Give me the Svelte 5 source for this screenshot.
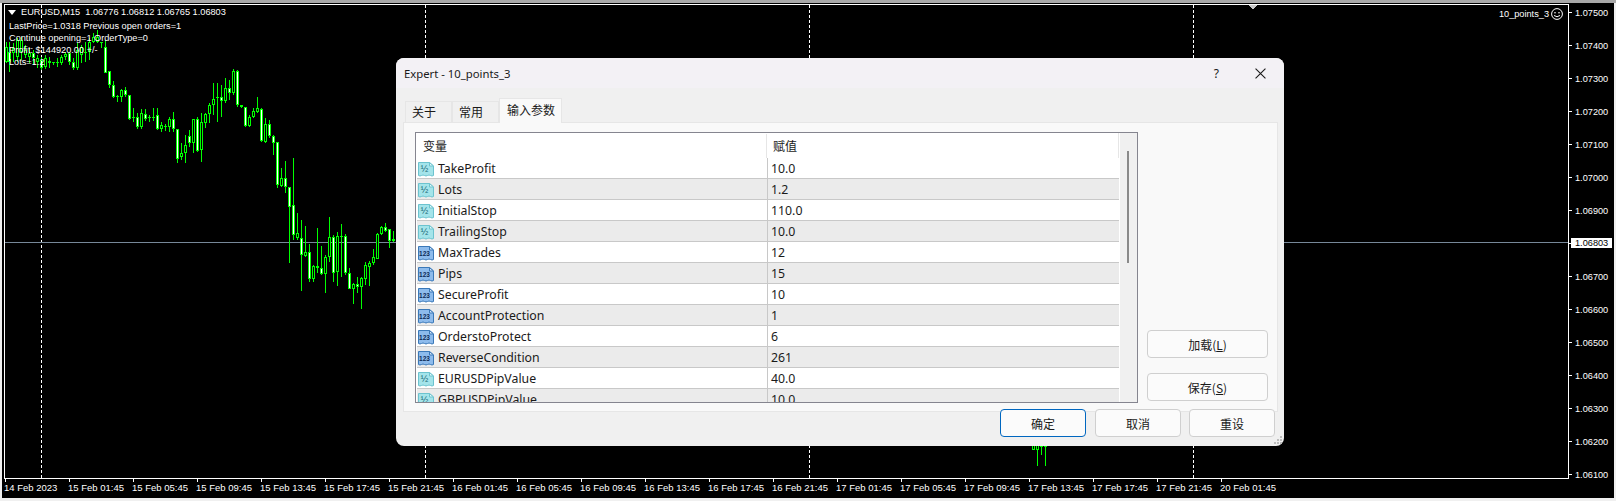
<script>
	// candles traced from the 3x crops: [x, high, low, bodyTop, bodyBottom, bear]
	const upper = [
		[20,125,190,140,185,0],[28,125,215,155,185,1],[40,130,185,145,160,0],[52,115,185,120,170,0],
		[64,110,180,120,155,0],[76,135,175,150,165,0],[88,145,190,160,170,0],[100,150,195,158,175,1],
		[112,165,205,175,185,0],[124,170,210,180,205,1],[136,165,208,175,200,0],[148,170,205,182,188,0],
		[160,185,195,187,190,0],[172,175,200,187,190,0],[184,165,195,172,188,0],[196,155,180,162,172,0],
		[208,155,195,160,185,1],[220,175,210,185,205,1],[232,130,210,150,203,0],[244,135,190,140,165,0],
		[256,125,185,155,160,0],[268,115,180,125,155,0],[280,100,130,110,125,0],[292,90,130,110,125,0],
		[304,125,145,125,130,0],[316,120,218,140,218,1],[328,212,265,214,256,1],[340,243,295,256,290,1],
		[352,285,305,287,290,0],[364,268,305,270,290,0],[376,262,290,270,285,1],[388,285,360,286,356,1],
		[400,325,365,352,355,0],[412,340,388,352,382,1],[424,328,388,340,382,0],[436,328,362,342,358,1],
		[448,345,365,351,354,0],[460,325,362,350,353,0],[472,325,390,346,388,1],[484,365,395,376,388,0],
		[496,372,392,378,382,0],[508,352,395,358,382,0],[520,335,395,358,388,1],[532,388,490,388,476,1],
		[544,430,480,460,472,0],[556,405,490,436,460,0],[568,390,440,408,428,1],[580,358,460,358,428,0],
		[592,350,455,358,452,1],[604,340,485,366,450,0],[616,340,385,342,370,0],[628,310,370,314,342,0],
		[640,250,345,296,314,0],[652,250,365,292,295,0],[664,255,350,292,302,1],[676,235,310,265,302,0],
		[688,240,300,265,278,1],[700,208,285,214,278,0],[712,210,320,214,314,1],[724,315,325,316,322,1],
		[736,320,380,322,378,1],[748,345,380,350,378,0],[760,325,355,332,350,0],[772,292,340,325,335,0],
		[784,325,425,326,424,1],[796,355,430,372,425,0],[808,360,415,372,408,1],[820,405,465,408,428,1],
		[832,426,564,426,555,1]
	];
	const lower = [
		[844,-96,-39,-66,-42,0],[856,-117,-21,-66,-39,1],[868,-39,190,-39,22,1],[880,-126,120,15,105,1],
		[892,40,120,100,115,0],[904,60,272,115,165,1],[916,78,170,155,167,0],[928,132,245,157,236,1],
		[940,195,245,197,238,0],[952,85,218,197,203,0],[964,138,225,203,223,1],[976,165,278,172,223,0],
		[988,52,185,112,172,0],[1000,105,245,112,218,1],[1012,95,258,108,215,0],[1024,72,230,108,111,0],
		[1036,103,225,108,218,1],[1048,205,268,218,266,1],[1060,250,312,252,266,0],[1072,232,278,253,260,1],
		[1084,232,326,235,260,0],[1096,185,255,196,236,0],[1108,182,258,190,200,0],[1120,148,195,172,190,0],
		[1132,100,178,102,176,0],[1144,78,105,82,103,0],[1156,70,95,82,92,1],[1168,88,143,88,122,1],
		[1180,93,125,118,122,0]
	];
	const toCandle = (yBase) => ([x, hi, lo, top, bottom, bear]) => ({
		x: Math.floor(x / 3),
		hi: Math.round(yBase + hi / 3),
		lo: Math.round(yBase + lo / 3),
		top: Math.round(yBase + top / 3),
		bottom: Math.round(yBase + bottom / 3),
		bear
	});
	// the few that stick out under the dialog
	const tail = [
		{ x: 1033, hi: 440, lo: 450, top: 440, bottom: 450, bear: 0 },
		{ x: 1037, hi: 440, lo: 466, top: 440, bottom: 450, bear: 0 },
		{ x: 1041, hi: 440, lo: 455, top: 440, bottom: 447, bear: 0 },
		{ x: 1045, hi: 440, lo: 466, top: 440, bottom: 447, bear: 0 }
	];
	const candles = [...upper.map(toCandle(0)), ...lower.map(toCandle(200)), ...tail];

	const sessionLines = [41, 425, 809, 1193];
	const prices = ['1.07500','1.07400','1.07300','1.07200','1.07100','1.07000','1.06900','','1.06700','1.06600','1.06500','1.06400','1.06300','1.06200','1.06100'];
	const times = ['14 Feb 2023','15 Feb 01:45','15 Feb 05:45','15 Feb 09:45','15 Feb 13:45','15 Feb 17:45','15 Feb 21:45','16 Feb 01:45','16 Feb 05:45','16 Feb 09:45','16 Feb 13:45','16 Feb 17:45','16 Feb 21:45','17 Feb 01:45','17 Feb 05:45','17 Feb 09:45','17 Feb 13:45','17 Feb 17:45','17 Feb 21:45','20 Feb 01:45'];
	const inputs = [
		['TakeProfit','10.0','d'],['Lots','1.2','d'],['InitialStop','110.0','d'],['TrailingStop','10.0','d'],
		['MaxTrades','12','i'],['Pips','15','i'],['SecureProfit','10','i'],['AccountProtection','1','i'],
		['OrderstoProtect','6','i'],['ReverseCondition','261','i'],['EURUSDPipValue','40.0','d'],['GBPUSDPipValue','10.0','d']
	];
</script>

{#snippet typeIcon(kind)}
	<svg class="type-icon" class:int={kind === 'i'} viewBox="0 0 16 16" width="16" height="16">
		<path class="doc" d="M.5 1.500h11l4 3.500v9.500q-1.500 1-3 0t-3 0-3 0-3 0-3 0z" />
		<path class="fold" d="M11.500 1.500v3.500h4z" />
		<text x="6.500" y="10.800" class="glyph">{kind === 'i' ? '123' : '½'}</text>
	</svg>
{/snippet}

<div class="screen">
	<div class="terminal">
		<div class="plot">
			<svg class="chart" viewBox="5 5 1563 473" width="1563" height="473" shape-rendering="crispEdges">
				{#each sessionLines as x}
					<line x1={x + 0.5} y1="5" x2={x + 0.5} y2="478" class="session" />
				{/each}
				<line x1="5" y1="242.500" x2="1568" y2="242.500" class="bid" />
				{#each candles as c}
					<rect x={c.x} y={c.hi} width="1" height={Math.max(c.lo - c.hi, 1)} fill="#00ff00" />
					<rect x={c.x - 1} y={c.top} width="3" height={Math.max(c.bottom - c.top, 1)} fill="#00ff00" />
					{#if c.bottom - c.top > 2}
						<rect x={c.x} y={c.top + 1} width="1" height={c.bottom - c.top - 2} fill={c.bear ? '#ffffff' : '#000000'} />
					{/if}
				{/each}
				<path d="M1248 5h9l-4.500 4.500z" fill="#c8c8c8" />
			</svg>
			<div class="symbol"><i class="caret"></i>EURUSD,M15&nbsp; 1.06776 1.06812 1.06765 1.06803</div>
			<div class="comment">
				<div>LastPrice=1.0318 Previous open orders=1</div>
				<div>Continue opening=1 OrderType=0</div>
				<div>Profit: $144920.00 +/-</div>
				<div>Lots=1.2</div>
			</div>
			<div class="expert">
				10_points_3
				<svg viewBox="0 0 12 12" width="12" height="12">
					<circle cx="6" cy="6" r="5.400" fill="none" stroke="#fff" />
					<circle cx="4" cy="4.700" r=".8" fill="#fff" />
					<circle cx="8" cy="4.700" r=".8" fill="#fff" />
					<path d="M3 7.500q3 2.500 6 0" fill="none" stroke="#fff" />
				</svg>
			</div>
		</div>

		<div class="price-axis">
			{#each prices as p}
				<div class="price-row"><i class="tick"></i>{p}</div>
			{/each}
			<div class="bid-tag">1.06803</div>
		</div>

		<div class="time-axis">
			{#each times as t}
				<div class="time-cell"><i class="tick"></i><span>{t}</span></div>
			{/each}
		</div>
	</div>

	<div class="dialog">
		<div class="titlebar">
			<span class="title">Expert - 10_points_3</span>
			<span class="help">?</span>
			<svg class="close" viewBox="0 0 10 10" width="11" height="11">
				<path d="M.5.5l9 9M9.500.5l-9 9" stroke="#1a1a1a" fill="none" />
			</svg>
		</div>

		<div class="tabs">
			<div class="tab">关于</div>
			<div class="tab">常用</div>
			<div class="tab active">输入参数</div>
		</div>

		<div class="panel">
			<div class="list">
				<div class="table">
					<div class="head">
						<div class="name">变量</div>
						<div class="value">赋值</div>
					</div>
					{#each inputs as [name, value, kind], i}
						<div class="row" class:alt={i % 2 === 1}>
							<div class="name">{@render typeIcon(kind)}{name}</div>
							<div class="value">{value}</div>
						</div>
					{/each}
				</div>
				<div class="scrollbar"><div class="thumb"></div></div>
			</div>
			<div class="side">
				<button class="btn wide">加载(<u>L</u>)</button>
				<button class="btn wide">保存(<u>S</u>)</button>
			</div>
		</div>

		<div class="footer">
			<button class="btn primary">确定</button>
			<button class="btn">取消</button>
			<button class="btn">重设</button>
		</div>

		<svg class="grip" viewBox="0 0 9 9" width="9" height="9" shape-rendering="crispEdges">
			<path d="M6 0h2v2H6zM3 3h2v2H3zM6 3h2v2H6zM0 6h2v2H0zM3 6h2v2H3zM6 6h2v2H6z" fill="#bdbdbd" />
		</svg>
	</div>
</div>

<style>
	:global(body) {
		background: #f0f0f0;
	}

	.screen {
		position: relative;
		width: 1616px;
		height: 501px;
		overflow: hidden;
		background: linear-gradient(#a8a8a8 0 3px, #f0f0f0 3px);
		font-family: "Noto Sans", "Noto Sans CJK SC", sans-serif;
	}

	/* --- chart window --- */
	.terminal {
		position: absolute;
		left: 2px;
		top: 3px;
		width: 1612px;
		height: 495px;
		box-sizing: border-box;
		padding: 1px 0 0 2px;
		background: #000;
		color: #fff;
		display: grid;
		grid-template-columns: 1565px 1fr;
		grid-template-rows: 475px 1fr;
		overflow: hidden;
		font-family: "Liberation Sans", sans-serif;
		font-size: 9.200px;
	}

	.plot {
		position: relative;
		border: 1px solid #fff;
	}

	.chart {
		display: block;
	}

	.session {
		stroke: #fff;
		stroke-dasharray: 3 2;
	}

	.bid {
		stroke: #778899;
	}

	.symbol,
	.comment,
	.expert {
		position: absolute;
		line-height: 12px;
		white-space: nowrap;
	}

	.symbol {
		left: 3px;
		top: 1px;
		display: flex;
		align-items: center;
	}

	.caret {
		width: 0;
		height: 0;
		margin-right: 5px;
		border: 4px solid transparent;
		border-top: 5px solid #fff;
		border-bottom: 0;
	}

	.comment {
		left: 4px;
		top: 15px;
	}

	.expert {
		right: 5px;
		top: 3px;
		display: flex;
		align-items: center;
		gap: 2px;
	}

	.price-axis {
		position: relative;
		margin-top: -8px;
	}

	.price-row {
		height: 33px;
		display: flex;
		align-items: center;
		gap: 3px;
	}

	.price-row .tick {
		width: 3px;
		height: 1px;
		background: #fff;
	}

	.bid-tag {
		position: absolute;
		left: 2px;
		top: 242px;
		width: 41px;
		height: 10px;
		padding-left: 4px;
		box-sizing: border-box;
		background: #fff;
		color: #000;
		line-height: 10px;
	}

	.time-axis {
		grid-column: 1 / -1;
		display: flex;
		padding-left: 1px;
		font-size: 9.500px;
	}

	.time-cell {
		width: 64px;
		flex: none;
		white-space: nowrap;
	}

	.time-cell .tick {
		display: block;
		width: 1px;
		height: 3px;
		background: #fff;
	}

	.time-cell span {
		display: block;
		margin: 0 0 0 -1px;
		line-height: 12px;
	}

	/* --- dialog --- */
	.dialog {
		position: absolute;
		left: 396px;
		top: 58px;
		width: 888px;
		height: 388px;
		display: flex;
		flex-direction: column;
		background: #f0f0f0;
		border-radius: 8px;
		color: #1a1a1a;
		font-size: 12.300px;
		overflow: hidden;
	}

	.titlebar {
		height: 30px;
		flex: none;
		display: flex;
		align-items: center;
		padding: 1px 18px 0 8px;
		box-sizing: border-box;
		background: #f3f1f5;
	}

	.title {
		flex: 1;
		font-size: 11.300px;
	}

	.help {
		margin-right: 36px;
		font-size: 12px;
	}

	.tabs {
		height: 34px;
		flex: none;
		display: flex;
		align-items: flex-end;
		padding-left: 9px;
		font-family: "Noto Sans CJK SC", sans-serif;
		font-size: 12px;
	}

	.tab {
		width: 47px;
		height: 21px;
		line-height: 19px;
		box-sizing: border-box;
		padding-left: 6px;
		background: #f0f0f0;
		border: 1px solid #e6e6e6;
		border-bottom: 0;
	}

	.tab.active {
		position: relative;
		width: 63px;
		height: 25px;
		margin-bottom: -1px;
		line-height: 22px;
		background: #f9f9f9;
		padding-left: 7px;
		z-index: 1;
	}

	.panel {
		height: 290px;
		flex: none;
		box-sizing: border-box;
		margin: 0 6px 0 7px;
		padding: 9px 0 0 11px;
		display: flex;
		background: #f9f9f9;
		border: 1px solid #e6e6e6;
	}

	.list {
		width: 723px;
		height: 271px;
		box-sizing: border-box;
		flex: none;
		display: flex;
		overflow: hidden;
		background: #f0f0f0;
		border: 1px solid #85858f;
	}

	.table {
		width: 703px;
		flex: none;
		background: #fff;
	}

	.head,
	.row {
		display: grid;
		grid-template-columns: 350px 1fr;
	}

	.head {
		height: 25px;
		align-items: center;
		font-family: "Noto Sans CJK SC", sans-serif;
		font-size: 12px;
		border-right: 1px solid #e6e6e6;
	}

	.head .name {
		padding-left: 7px;
		line-height: 24px;
	}

	.head .value {
		padding-left: 6px;
		line-height: 24px;
		border-left: 1px solid #e6e6e6;
	}

	.row {
		height: 21px;
		box-sizing: border-box;
		margin-left: 1px;
		grid-template-rows: 20px;
		border-bottom: 1px solid #c8c8c8;
		line-height: 20px;
	}

	.row.alt {
		background: #ebebeb;
	}

	.row .name {
		display: flex;
		align-items: center;
		gap: 4px;
		padding: 1px 0 0 1px;
	}

	.row .value {
		padding: 1px 0 0 3px;
		border-left: 1px solid #c8c8c8;
	}

	.type-icon {
		flex: none;
	}

	.doc {
		fill: #a4e4ea;
		stroke: #6cc3cf;
		stroke-width: 1;
	}

	.fold {
		fill: #e4f8fa;
		stroke: #6cc3cf;
	}

	.glyph {
		font-family: "Liberation Sans", sans-serif;
		font-size: 9px;
		text-anchor: middle;
		fill: #10606e;
	}

	.int .doc {
		fill: #8dbbec;
		stroke: #3a78b8;
	}

	.int .fold {
		fill: #d6e7f9;
		stroke: #3a78b8;
	}

	.int .glyph {
		font-size: 6.500px;
		font-weight: 700;
		fill: #0e2a58;
	}

	.scrollbar {
		flex: 1;
		border-left: 1px solid #fff;
	}

	.thumb {
		width: 2px;
		height: 112px;
		margin: 18px 0 0 7px;
		background: #8a8a8a;
	}

	.side {
		margin-left: 9px;
		width: 121px;
		height: 269px;
		display: flex;
		flex-direction: column;
		justify-content: flex-end;
		gap: 15px;
	}

	.footer {
		position: relative;
		display: flex;
		justify-content: flex-end;
		gap: 8px;
		margin-top: -3px;
		padding-right: 9px;
	}

	.btn {
		width: 86px;
		height: 28px;
		box-sizing: border-box;
		padding: 0;
		background: #fbfbfb;
		border: 1px solid #cfcfcf;
		border-radius: 4px;
		color: #1a1a1a;
		font: 12px "Noto Sans CJK SC", sans-serif;
	}

	.btn.wide {
		width: 121px;
	}

	.btn.primary {
		margin-right: 1px;
		border-color: #0067c0;
	}

	.grip {
		position: absolute;
		right: 1px;
		bottom: 1px;
	}
</style>
